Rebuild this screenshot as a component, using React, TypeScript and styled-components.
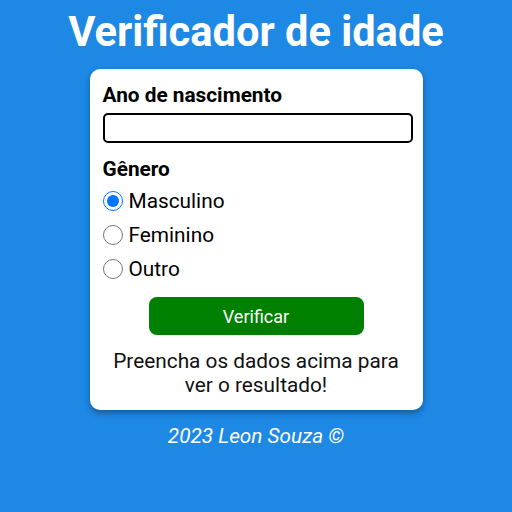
import React from "react";
import styled, { createGlobalStyle } from "styled-components";

const Global = createGlobalStyle`
  html, body { margin: 0; padding: 0; }
  body {
    background: #1e88e5;
    font-family: Roboto, "Liberation Sans", sans-serif;
    min-height: 512px;
  }
`;

const Page = styled.div`
  display: flex;
  flex-direction: column;
  align-items: center;
  padding-top: 8px;
`;

const Title = styled.h1`
  margin: 0;
  color: #fff;
  font-size: 41.6px;
  font-weight: 700;
  line-height: 47px;
`;

const Card = styled.main`
  margin-top: 14px;
  width: 333px;
  box-sizing: border-box;
  background: #fff;
  border-radius: 10px;
  box-shadow: 0 3px 6px rgba(0, 0, 0, 0.35);
  padding: 15px 13px 13px 13px;
  display: flex;
  flex-direction: column;
`;

const Label = styled.label`
  font-size: 20.8px;
  font-weight: 700;
  color: #000;
  line-height: 23px;
`;

const TextInput = styled.input`
  margin-top: 6px;
  height: 30px;
  box-sizing: border-box;
  border: 2px solid #000;
  border-radius: 5px;
  width: calc(100% + 3px);
  font-size: 18px;
  padding: 0 6px;
  outline: none;
`;

const Section = styled.div`
  margin-top: 15px;
  display: flex;
  flex-direction: column;
`;

const Options = styled.div`
  margin-top: 3px;
  display: flex;
  flex-direction: column;
`;

const Option = styled.label`
  display: flex;
  align-items: center;
  height: 34px;
  font-size: 20.8px;
  color: #000;
`;

const Radio = styled.input`
  width: 20px;
  height: 20px;
  margin: 0 6px 0 0;
  accent-color: #0075ff;
`;

const Button = styled.button`
  align-self: center;
  margin-top: 11px;
  width: 215px;
  height: 38px;
  border: none;
  border-radius: 8px;
  background: #008000;
  color: #fff;
  font-family: Roboto, "Liberation Sans", sans-serif;
  font-size: 18px;
`;

const Result = styled.p`
  margin: 14px 0 0;
  text-align: center;
  font-size: 20.8px;
  line-height: 24px;
  color: #111;
`;

const Footer = styled.footer`
  margin-top: 14px;
  color: #fff;
  font-style: italic;
  font-size: 20.8px;
  line-height: 24px;
`;

export default function App() {
  const [g, setG] = React.useState("m");
  return (
    <>
      <Global />
      <Page>
        <Title>Verificador de idade</Title>
        <Card>
          <Label htmlFor="ano">Ano de nascimento</Label>
          <TextInput id="ano" type="number" />
          <Section>
            <Label>Gênero</Label>
            <Options>
              <Option>
                <Radio type="radio" name="sexo" checked={g === "m"} onChange={() => setG("m")} />
                Masculino
              </Option>
              <Option>
                <Radio type="radio" name="sexo" checked={g === "f"} onChange={() => setG("f")} />
                Feminino
              </Option>
              <Option>
                <Radio type="radio" name="sexo" checked={g === "o"} onChange={() => setG("o")} />
                Outro
              </Option>
            </Options>
          </Section>
          <Button>Verificar</Button>
          <Result>Preencha os dados acima para ver o resultado!</Result>
        </Card>
        <Footer>2023 Leon Souza ©</Footer>
      </Page>
    </>
  );
}
